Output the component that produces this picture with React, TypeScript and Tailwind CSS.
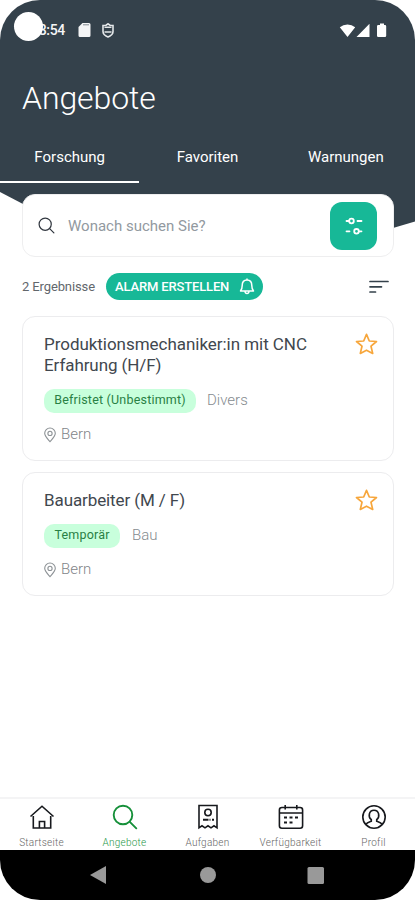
import React from "react";

type IconProps = { className?: string };

const StarIcon = () => (
  <svg className="-mt-px h-[22px] w-[23px] shrink-0" viewBox="0 0 23 22" fill="none" stroke="#f7a63b" strokeWidth="1.7" strokeLinejoin="round">
    <path d="M11.5 1.3 14.3 8l7.2.5-5.5 4.7 1.7 7.2-6.2-3.2-6.2 3.2L7 13.2 1.5 8.5 8.7 8Z" />
  </svg>
);

const PinIcon = () => (
  <svg className="h-4 w-3 shrink-0" viewBox="0 0 12 16" fill="none" stroke="#8d9296" strokeWidth="1.1">
    <path d="M6 14.7C3.3 11.6.7 9.2.7 6.3a5.3 5.3 0 0 1 10.6 0c0 2.9-2.6 5.3-5.3 8.4Z" />
    <circle cx="6" cy="6.4" r="2.1" />
  </svg>
);

const HomeIcon = ({ className }: IconProps) => (
  <svg className={className} viewBox="0 0 26 26" fill="none" stroke="currentColor" strokeWidth="1.6">
    <path d="M1.5 12.5 13 2.2l11.5 10.3M4.3 12v12h17.4V12M10.4 24v-6.5h5.2V24" />
  </svg>
);

const SearchIcon = ({ className }: IconProps) => (
  <svg className={className} viewBox="0 0 26 26" fill="none" stroke="currentColor" strokeWidth="1.9" strokeLinecap="round">
    <circle cx="11" cy="11" r="9.3" />
    <path d="m17.8 17.8 6.5 6.5" />
  </svg>
);

const TasksIcon = ({ className }: IconProps) => (
  <svg className={className} viewBox="0 0 26 26" fill="none" stroke="currentColor" strokeWidth="1.6">
    <path d="M4 1.5h18v22.3l-3-2-3 2-3-2-3 2-3-2-3 2Z" />
    <circle cx="13" cy="8.5" r="3.2" />
    <path strokeWidth="1.9" d="M8 15.8h5.5m1 0h1m1.500 0h2" />
  </svg>
);

const CalendarIcon = ({ className }: IconProps) => (
  <svg className={className} viewBox="0 0 26 26" fill="none" stroke="currentColor" strokeWidth="1.6">
    <rect x="1.4" y="3.5" width="23.2" height="20.7" rx="2.5" />
    <path d="M1.4 9h23.2M7.2 1v4.5M18.8 1v4.5" />
    <path strokeWidth="2" d="M6 13.5h3m2.5 0h3m2.5 0h3M6 18.5h3m2.5 0h3" />
  </svg>
);

const ProfileIcon = ({ className }: IconProps) => (
  <svg className={className} viewBox="0 0 26 26" fill="none" stroke="currentColor" strokeWidth="1.6">
    <circle cx="13" cy="13" r="11.2" />
    <path d="M4.8 20.5c1.2-2 3.5-2.5 5.5-3.2v-1.600c-3.500-3-2.500-9.500 2.700-9.500s6.200 6.500 2.700 9.500v1.600c2 .7 4.300 1.200 5.500 3.200" />
  </svg>
);

type Job = { title: React.ReactNode; size: string; tag: string; tagStyle: string; field: string; gap: string };

const jobs: Job[] = [
  {
    title: <><span className="tracking-[-0.04px]">Produktionsmechaniker:in mit CNC</span><br /><span className="tracking-[-0.08px]">Erfahrung (H/F)</span></>,
    size: "h-[145px]", tag: "Befristet (Unbestimmt)", tagStyle: "w-[152px] tracking-[0.2px]", field: "Divers", gap: "gap-[11px]",
  },
  {
    title: <span className="tracking-[-0.1px]">Bauarbeiter (M / F)</span>,
    size: "h-[124px]", tag: "Temporär", tagStyle: "w-[76px] tracking-[0.2px]", field: "Bau", gap: "gap-[12px]",
  },
];

function JobCard({ job }: { job: Job }) {
  return (
    <article className={`flex justify-between rounded-[13px] border-[1.5px] border-[#ececee] bg-white pt-[17px] pr-[15px] pl-[21px] ${job.size}`}>
      <div>
        <h2 className="text-[17px] leading-[21px] font-normal text-[#41474e]">{job.title}</h2>
        <div className={`mt-[13px] flex items-center ${job.gap}`}>
          <span className={`flex h-[24px] items-center justify-center rounded-[10px] bg-[#c8ffdc] text-[12.5px] whitespace-nowrap text-[#288044] ${job.tagStyle}`}>{job.tag}</span>
          <span className="text-[15px] font-light text-[#858b8f]">{job.field}</span>
        </div>
        <div className="mt-[11px] flex h-[22px] items-center gap-[5px]">
          <PinIcon />
          <span className="text-[15px] font-light text-[#7f8589]">Bern</span>
        </div>
      </div>
      <StarIcon />
    </article>
  );
}

const nav = [
  { label: "Startseite", Icon: HomeIcon, style: "text-[#666]", icon: "text-[#17191d]" },
  { label: "Angebote", Icon: SearchIcon, style: "text-[#269748]", icon: "text-[#16903a]" },
  { label: "Aufgaben", Icon: TasksIcon, style: "text-[#666]", icon: "text-[#17191d]" },
  { label: "Verfügbarkeit", Icon: CalendarIcon, style: "text-[#666]", icon: "text-[#17191d]" },
  { label: "Profil", Icon: ProfileIcon, style: "text-[#666]", icon: "text-[#17191d]" },
];

export default function App() {
  return (
    <div className="relative isolate flex h-[900px] w-[415px] flex-col overflow-hidden rounded-[40px] bg-white font-['Roboto',sans-serif]">
      <svg className="absolute top-0 left-0 -z-10 h-[250px] w-[415px]" viewBox="0 0 415 250" fill="#34414b">
        <path d="M0 0h415v221.5L393 228Q210 270 23 204L0 192Z" />
      </svg>

      <header className="flex h-[184px] flex-col text-white">
        <div className="flex h-[60px] items-center pr-[28px] pl-[14px]">
          <div className="relative flex h-[30px] w-[51px] items-center justify-end">
            <span className="text-[14px] font-medium tracking-[-0.3px] text-[#f4f5f6]">8:54</span>
            <span className="absolute -top-[3px] left-0 h-[29px] w-[29px] rounded-full bg-white" />
          </div>
          <svg className="ml-[13px] h-[14px] w-[13px]" viewBox="0 0 13 14" fill="#f4f5f6">
            <path d="M4.5 0H11a1.5 1.5 0 0 1 1.5 1.5v11A1.5 1.5 0 0 1 11 14H2a1.5 1.5 0 0 1-1.500-1.500V4Z" />
            <path d="M5 1.8h6" stroke="#34414b" strokeWidth=".6" />
          </svg>
          <svg className="ml-[11px] h-[15px] w-3" viewBox="0 0 12 15" fill="none" stroke="#e4e7e9" strokeWidth="1.6">
            <path d="m1 2.500 3-.3L6 .8l2 1.400 3 .3v6C11 11 8.500 13 6 14c-2.500-1-5-3-5-5.500Z" />
            <path d="M2.500 4.300h7M2.500 9h7" />
          </svg>
          <svg className="ml-auto h-[15px] w-[48px]" viewBox="0 0 48 15" fill="white">
            <path d="M.8 4.3a12 12 0 0 1 15.4 0L8.500 14ZM17.500 14 30.500.8V14ZM38 3.200q0-1.200 1.200-1.200H41V.5h4V2h1q1.200 0 1.200 1.200v9.600q0 1.200-1.200 1.200h-6.800Q38 14 38 12.800Z" />
          </svg>
        </div>
        <h1 className="flex h-[76px] items-center pl-[22px] text-[32px] leading-none font-light tracking-[-0.08px]">Angebote</h1>
        <nav className="grid h-[47px] grid-cols-3 text-center text-[15px] leading-[42px]">
          <span className="-mr-px border-b-2 border-white">Forschung</span>
          <span>Favoriten</span>
          <span>Warnungen</span>
        </nav>
      </header>

      <main className="flex flex-1 flex-col pt-[10px] pr-[21px] pl-[22px]">
        <div className="flex h-[63px] shrink-0 items-center rounded-[13px] border border-[#eeeeef] bg-white pr-4 pl-[15px]">
          <SearchIcon className="h-[17px] w-[17px] text-[#333941]" />
          <span className="ml-[13px] pt-px text-[15px] text-[#9299a0]">Wonach suchen Sie?</span>
          <button className="ml-auto flex h-12 w-[47px] items-center justify-center rounded-[12px] bg-[#17b897]">
            <svg className="h-5 w-5" viewBox="0 0 20 20" fill="none" stroke="white" strokeWidth="1.8" strokeLinecap="round">
              <circle cx="7.5" cy="5" r="2.3" /><path d="M2.500 5H5m8.500 0h4M2.500 15.300h3m9.500 0h2.500" /><circle cx="12.5" cy="15.3" r="2.3" />
            </svg>
          </button>
        </div>

        <div className="mt-4 flex h-[27px] shrink-0 items-center">
          <span className="w-[84px] text-[13px] tracking-[-0.12px] whitespace-nowrap text-[#62676c]">2 Ergebnisse</span>
          <button className="flex h-[27px] w-[157px] items-center justify-between rounded-full bg-[#17b897] pr-[8px] pl-[9px] text-[13px] font-medium tracking-[-0.15px] whitespace-nowrap text-white">
            ALARM ERSTELLEN
            <svg className="h-[17px] w-[16px]" viewBox="0 0 16 17" fill="none" stroke="white" strokeWidth="1.5" strokeLinejoin="round">
              <path d="M1.500 13h13c-1.300-1.500-1.700-2-1.700-5.500C12.800 4.200 11 2 8 2S3.200 4.200 3.200 7.500c0 3.500-.4 4-1.700 5.500ZM8 2V.5M6 13.500c.3 2.700 3.700 2.700 4 0" />
            </svg>
          </button>
          <svg className="mr-[5px] ml-auto h-[14px] w-5" viewBox="0 0 20 14" fill="none" stroke="#34414b" strokeWidth="1.7" strokeLinecap="round">
            <path d="M1 1.500h18M1 6.800h11.500M1 12h5.500" />
          </svg>
        </div>

        <section className="mt-[15.5px] flex flex-col gap-[11px]">
          {jobs.map((job) => <JobCard key={job.tag} job={job} />)}
        </section>
      </main>

      <footer className="shrink-0">
        <nav className="flex h-[53px] border-t-2 border-[#f4f4f5]">
          {nav.map(({ label, Icon, style, icon }) => (
            <span key={label} className={`flex flex-1 flex-col items-center pt-[5px] text-[10px] leading-3 font-light tracking-[0.25px] ${style}`}>
              <Icon className={`mb-[7px] h-[26px] w-[26px] shrink-0 ${icon}`} />
              {label}
            </span>
          ))}
        </nav>
        <div className="flex h-[50px] items-center bg-black pl-[90px]">
          <svg className="h-[20px] w-[235px]" viewBox="0 0 235 20" fill="#999">
            <path d="M0 10 16 1v18Z" /><circle cx="118" cy="10" r="8" /><rect x="217.5" y="2" width="16.5" height="17" rx="1.5" />
          </svg>
        </div>
      </footer>
    </div>
  );
}
